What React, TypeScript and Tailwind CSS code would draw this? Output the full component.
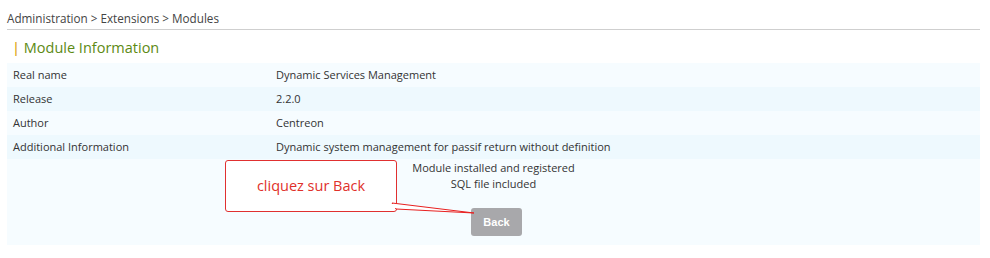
const rows = [
  { label: 'Real name', value: 'Dynamic Services Management' },
  { label: 'Release', value: '2.2.0' },
  { label: 'Author', value: 'Centreon' },
  { label: 'Additional Information', value: 'Dynamic system management for passif return without definition' },
];

export default function App() {
  return (
    <div className="w-[990px] h-[258px] bg-white text-[#333] font-['Open_Sans',sans-serif] relative">
      <div className="pl-[7px] pr-[10px]">
        <div className="h-[30px] pt-[10px] text-[11.7px] leading-[16px] text-[#444] border-b border-[#cfcfcf]">
          Administration &gt; Extensions &gt; Modules
        </div>
        <div className="h-[33px] pl-[5px] pt-[8px] text-[14.5px] leading-[20px] text-[#5d8a13]">
          <span className="text-[#e0a81c] font-semibold">|</span> Module Information
        </div>
        <table className="w-[973px] text-[11px] border-collapse">
          <tbody>
            {rows.map((r, i) => (
              <tr key={r.label} className={i % 2 === 0 ? 'bg-[#f6fcff] h-[24px]' : 'bg-[#eef9fe] h-[24px]'}>
                <td className="w-[269px] pl-[6px] align-middle">{r.label}</td>
                <td className="align-middle">{r.value}</td>
              </tr>
            ))}
            <tr className="bg-[#f6fcff]">
              <td colSpan={2} className="h-[86px] align-top">
                <div className="flex flex-col items-center">
                  <div className="pt-[1px] leading-[16px] text-center">
                    Module installed and registered
                    <br />
                    SQL file included
                  </div>
                  <button className="mt-[16px] ml-[6px] w-[51px] h-[28px] rounded-[3px] bg-[#a8a8ab] text-white font-bold text-[11px] font-['Liberation_Sans',sans-serif]">
                    Back
                  </button>
                </div>
              </td>
            </tr>
          </tbody>
        </table>
      </div>
      <div className="absolute left-[225px] top-[160px] w-[172px] h-[52px] bg-white border border-[#e03030] rounded-[3px] flex items-center justify-center pb-[1px] text-[14.5px] text-[#e0302a]">
        cliquez sur Back
      </div>
      <svg className="absolute left-[390px] top-[198px]" width="90" height="22" viewBox="0 0 90 22">
        <polygon points="2,5 84,15 6,11" fill="white" stroke="#e82020" strokeWidth="1" />
        <rect x="0" y="6" width="6" height="4" fill="white" />
      </svg>
    </div>
  );
}
